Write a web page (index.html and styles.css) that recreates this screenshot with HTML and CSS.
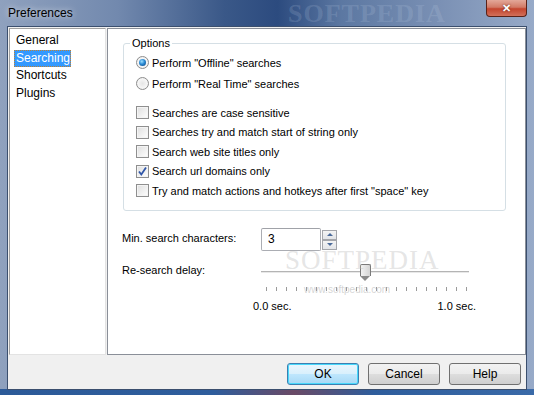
FILE: index.html
```html
<!DOCTYPE html>
<html lang="en">
<head>
    <meta charset="UTF-8">
    <title>Preferences</title>
    <link rel="stylesheet" href="styles.css">
</head>
<body>
    <div id="window">
        <div id="titlebar">
            <span class="title">Preferences</span>
            <span class="mark-title">SOFTPEDIA</span>
            <span class="close">&#10005;</span>
        </div>

        <div id="client">
            <div id="panes">
                <ul id="nav">
                    <li>General</li>
                    <li class="selected">Searching</li>
                    <li>Shortcuts</li>
                    <li>Plugins</li>
                </ul>

                <div id="page">
                    <fieldset class="group">
                        <legend>Options</legend>
                        <div class="group-body">
                            <div class="opt radio-row"><span class="radio checked"></span>Perform "Offline" searches</div>
                            <div class="opt radio-row"><span class="radio"></span>Perform "Real Time" searches</div>
                            <div class="spacer"></div>
                            <div class="opt check-row"><span class="check"></span>Searches are case sensitive</div>
                            <div class="opt check-row"><span class="check"></span>Searches try and match start of string only</div>
                            <div class="opt check-row"><span class="check"></span>Search web site titles only</div>
                            <div class="opt check-row">
                                <span class="check">
                                    <svg width="11" height="11" viewBox="0 0 11 11"><path d="M2 5.5 L4.3 8.5 L9 1.5" fill="none" stroke="#3056a8" stroke-width="1.8"/></svg>
                                </span>Search url domains only
                            </div>
                            <div class="opt check-row"><span class="check"></span>Try and match actions and hotkeys after first "space" key</div>
                        </div>
                    </fieldset>

                    <div class="field-row">
                        <span class="field-label">Min. search characters:</span>
                        <span class="textbox">3</span>
                        <span class="spin">
                            <span class="spin-btn"><span class="arrow-up"></span></span>
                            <span class="spin-btn"><span class="arrow-down"></span></span>
                        </span>
                    </div>

                    <div class="slider-row">
                        <span class="field-label">Re-search delay:</span>
                        <div class="slider">
                            <div class="track"></div>
                            <span class="thumb"></span>
                            <span class="mark-big">SOFTPEDIA</span>
                        </div>
                    </div>
                    <div class="ticks"></div>
                    <div class="scale">
                        <span>0.0 sec.</span>
                        <span>1.0 sec.</span>
                    </div>
                    <span class="mark-small">www.softpedia.com</span>
                </div>
            </div>

            <div id="buttons">
                <span class="btn default">OK</span>
                <span class="btn">Cancel</span>
                <span class="btn">Help</span>
            </div>
        </div>
    </div>
</body>
</html>
```

FILE: styles.css
```css
* {
    box-sizing: border-box;
}
body {
    margin: 0;
    font-family: "Liberation Sans", Arial, sans-serif;
    font-size: 11px;
    color: #000;
}
#window {
    width: 534px;
    height: 395px;
    background: linear-gradient(90deg, #8fa1be 0%, #7289ae 22%, #3a5888 42%, #2c4b7f 52%, #5c78a2 64%, #7a90b4 82%, #97aac8 100%);
    position: relative;
    overflow: hidden;
}
#window::after {
    content: "";
    position: absolute;
    left: 0;
    right: 0;
    bottom: 0;
    height: 6px;
    background: linear-gradient(90deg, #2c5a98 0%, #2e5d9c 40%, #6a4a66 55%, #2e5d9c 70%, #3a6aa8 100%);
}
#titlebar {
    height: 27px;
    position: relative;
}
#titlebar .title {
    position: absolute;
    left: 8px;
    top: 6px;
    font-size: 12px;
    color: #000;
    text-shadow: 0 0 6px rgba(255, 255, 255, 0.8);
}
.mark-title {
    position: absolute;
    left: 288px;
    top: 0;
    font-family: "Liberation Serif", serif;
    font-size: 26px;
    font-weight: bold;
    letter-spacing: 1px;
    color: rgba(200, 215, 235, 0.18);
    line-height: 27px;
}
.close {
    position: absolute;
    left: 486px;
    top: 0;
    width: 41px;
    height: 17px;
    border: 1px solid #5a2218;
    border-top: none;
    border-radius: 0 0 4px 4px;
    background: linear-gradient(180deg, #e3a899 0%, #d27a66 45%, #c4452e 55%, #d2705a 100%);
    color: #fff;
    font-size: 11px;
    font-weight: bold;
    text-align: center;
    line-height: 16px;
    text-shadow: 0 0 2px #5a2218;
}

#client {
    position: relative;
    z-index: 1;
    margin-left: 8px;
    width: 518px;
    height: 362px;
    background: #f0f0f0;
    box-shadow: 0 0 0 1px #3b4f6e;
}
#panes {
    display: flex;
    padding: 1px 0 0 1px;
    gap: 1px;
}
#nav {
    list-style: none;
    margin: 0;
    padding: 3px 0 0 4px;
    width: 97px;
    height: 327px;
    background: #fff;
    border: 1px solid;
    border-color: #a0a0a0 #e3e3e3 #e3e3e3 #a0a0a0;
}
#nav li {
    display: block;
    width: max-content;
    height: 17.5px;
    line-height: 17.5px;
    padding: 0 1px 0 2px;
    font-size: 12px;
}
#nav li.selected {
    background: #3399ff;
    color: #fff;
    outline: 1px dotted #c08030;
    outline-offset: -1px;
}

#page {
    position: relative;
    width: 419px;
    height: 327px;
    background: #fff;
    border: 1px solid #8a8f98;
    padding: 8px 0 0 14px;
}
.group {
    margin: 0 0 0 1px;
    padding: 0;
    width: 383px;
    border: 1px solid #d5dfe5;
    border-radius: 3px;
}
.group legend {
    margin-left: 6px;
    padding: 0 2px;
    line-height: 13px;
}
.group-body {
    padding: 2px 0 9.5px 12px;
}
.opt {
    display: flex;
    align-items: center;
    gap: 3px;
}
.radio-row {
    height: 21px;
}
.check-row {
    height: 19.5px;
}
.spacer {
    height: 9px;
}
.radio {
    width: 13px;
    height: 13px;
    border: 1px solid #8d8d8d;
    border-radius: 50%;
    background: radial-gradient(circle at 50% 50%, #e6e6e6 0%, #f6f6f6 60%, #dcdcdc 100%);
    position: relative;
}
.radio.checked::after {
    content: "";
    position: absolute;
    left: 2px;
    top: 2px;
    width: 7px;
    height: 7px;
    border-radius: 50%;
    background: radial-gradient(circle at 40% 35%, #9ee0ff 0%, #2a8ad4 45%, #0c3f7a 100%);
}
.check {
    width: 13px;
    height: 13px;
    border: 1px solid #8f8f8f;
    background: linear-gradient(135deg, #dedede 0%, #f5f5f5 70%, #ffffff 100%);
    box-shadow: inset 0 0 0 1px #f4f4f4;
    display: flex;
    align-items: center;
    justify-content: center;
}

.field-row {
    display: flex;
    align-items: center;
    height: 23px;
    margin-top: 17px;
}
.field-label {
    width: 139px;
    flex: none;
}
.field-row .field-label {
    padding-bottom: 4px;
}
.textbox {
    width: 60px;
    height: 23px;
    line-height: 21px;
    padding-left: 6px;
    border: 1px solid #abadb3;
    border-top-color: #a0a2a8;
    border-radius: 2px;
    font-size: 12px;
}
.spin {
    display: flex;
    flex-direction: column;
    margin-left: 1px;
}
.spin-btn {
    width: 15px;
    height: 10px;
    border: 1px solid #a4a6ab;
    background: linear-gradient(180deg, #f4f4f4, #e2e4e8);
    display: flex;
    align-items: center;
    justify-content: center;
}
.arrow-up {
    border: 3px solid transparent;
    border-bottom: 3px solid #4a6a9a;
    border-top: none;
}
.arrow-down {
    border: 3px solid transparent;
    border-top: 3px solid #4a6a9a;
    border-bottom: none;
}

.slider-row {
    display: flex;
    align-items: center;
    height: 22px;
    margin-top: 8px;
}
.slider {
    position: relative;
    width: 208px;
    height: 22px;
}
.track {
    margin-top: 12px;
    height: 2px;
    background: #b4b4b4;
    border-bottom: 1px solid #e8e8e8;
}
.thumb {
    position: absolute;
    left: 99px;
    top: 5px;
    width: 11px;
    height: 12px;
    border: 1px solid #7a7a7a;
    border-bottom: none;
    border-radius: 2px 2px 0 0;
    background: linear-gradient(90deg, #f2f2f2, #d4d4d4);
}
.thumb::after {
    content: "";
    position: absolute;
    left: -1px;
    top: 11px;
    border-left: 5.5px solid transparent;
    border-right: 5.5px solid transparent;
    border-top: 5px solid #8a8a8a;
}
.mark-big {
    position: absolute;
    left: 24px;
    top: -14px;
    font-family: "Liberation Serif", serif;
    font-size: 27px;
    letter-spacing: 1px;
    color: rgba(190, 190, 190, 0.4);
}
.mark-small {
    position: absolute;
    left: 196px;
    top: 255px;
    font-size: 10px;
    color: rgba(170, 170, 170, 0.5);
}
.ticks {
    margin: 6px 0 0 144px;
    width: 201px;
    height: 4px;
    background: repeating-linear-gradient(90deg, #9a9a9a 0 1px, transparent 1px 10px);
}
.scale {
    display: flex;
    justify-content: space-between;
    width: 223px;
    margin: 9px 0 0 131px;
    line-height: 13px;
}

#buttons {
    display: flex;
    justify-content: flex-end;
    gap: 9px;
    padding: 8px 5px 0 0;
}
.btn {
    width: 72px;
    height: 22px;
    line-height: 20px;
    text-align: center;
    border: 1px solid #707070;
    border-radius: 3px;
    background: linear-gradient(180deg, #f2f2f2 0%, #ebebeb 48%, #dddddd 52%, #cfcfcf 100%);
    font-size: 12px;
}
.btn.default {
    border-color: #3c7fb1;
    box-shadow: inset 0 0 0 1px #48d8fb;
    background: linear-gradient(180deg, #eaf6fd 0%, #d9f0fc 48%, #bee6fd 52%, #a7d9f5 100%);
}
```
